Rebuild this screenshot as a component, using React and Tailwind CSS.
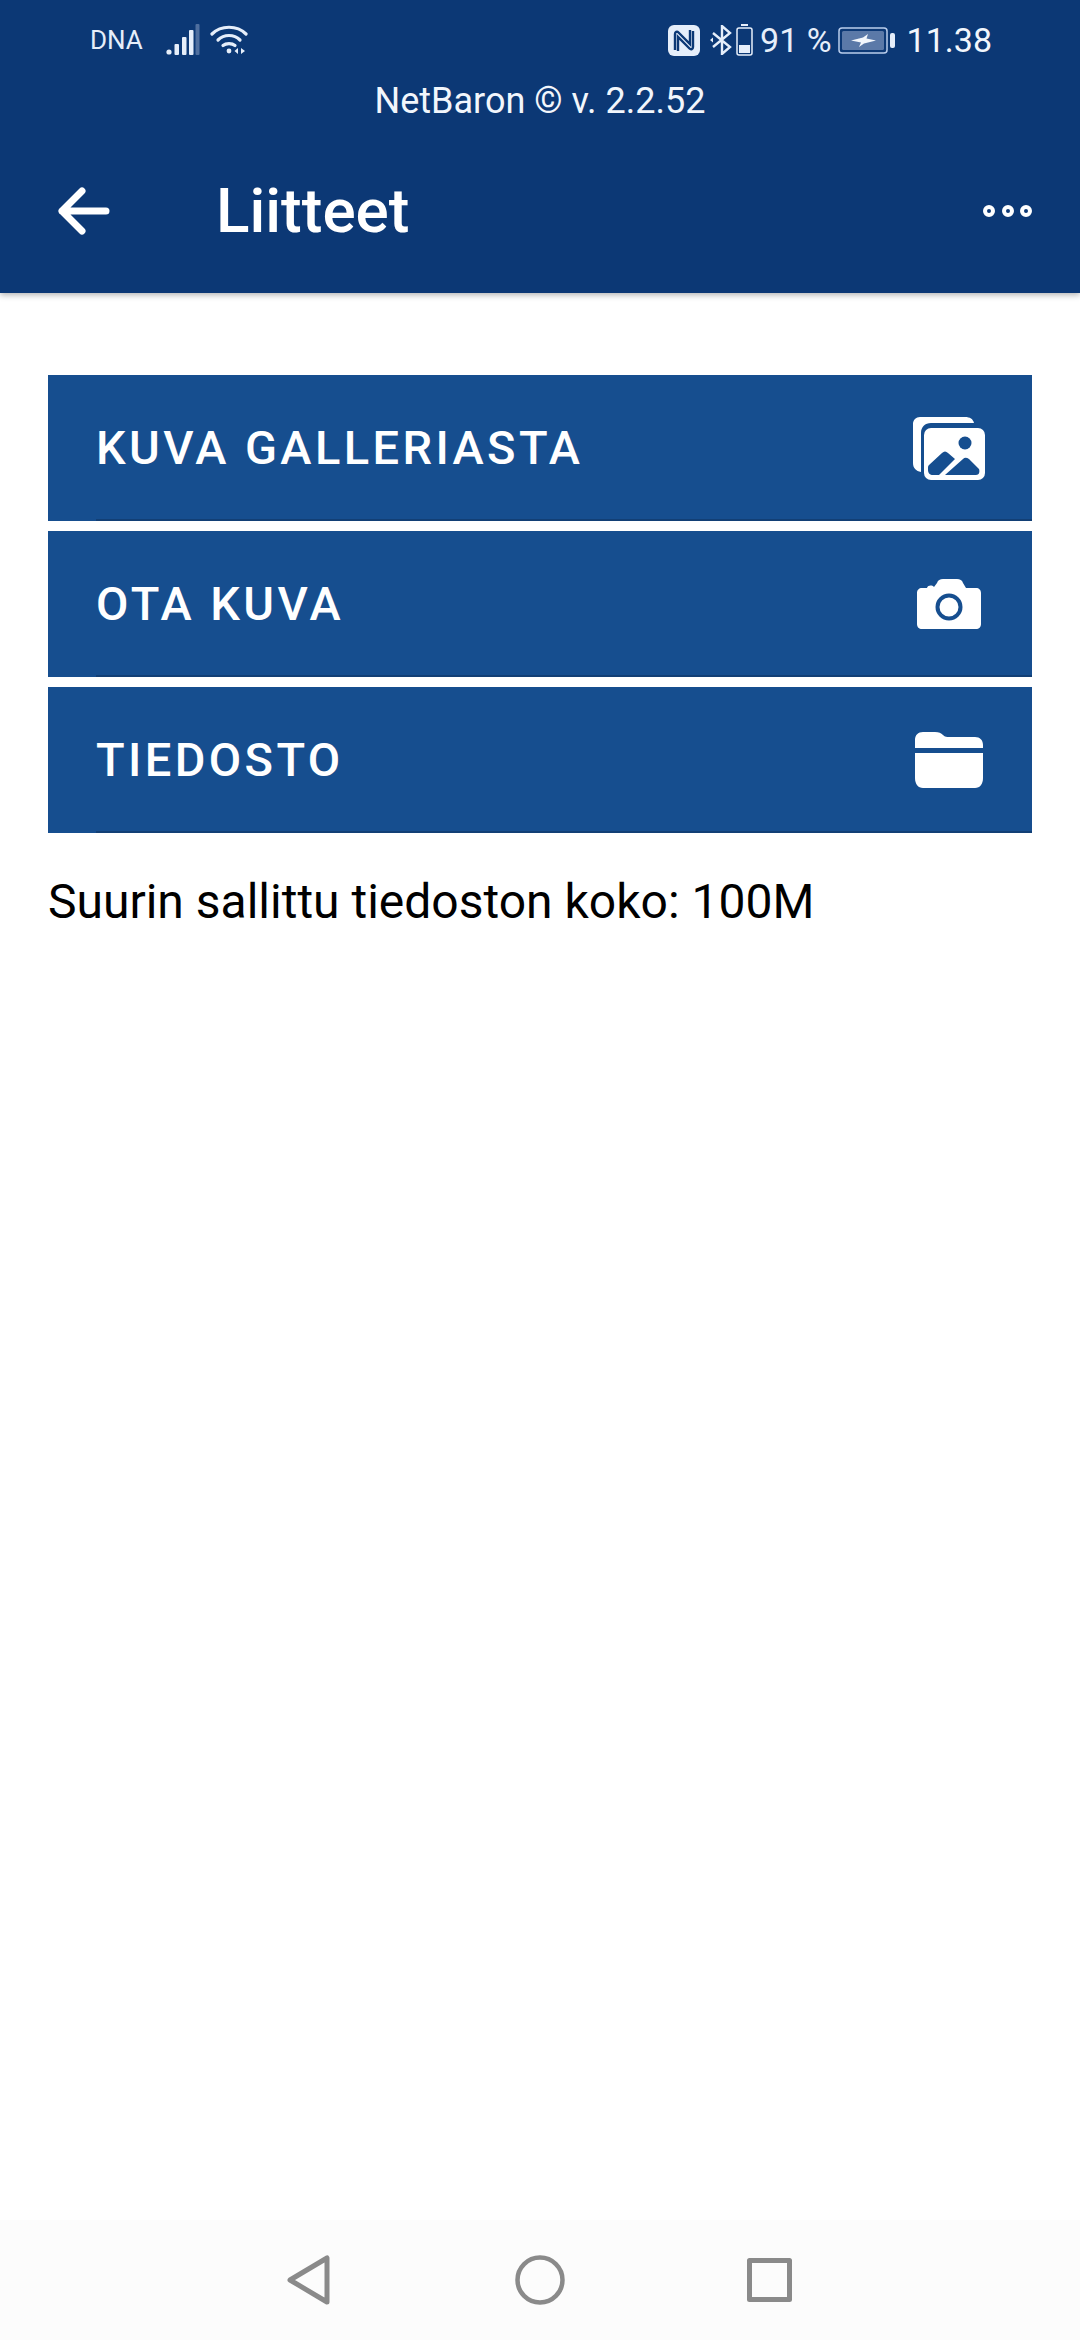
import React from 'react';

const SignalIcon = () => (
  <svg width="34" height="32" viewBox="0 0 34 32" fill="#e6eefa">
    <circle cx="3" cy="28" r="2.6" />
    <rect x="8.5" y="20" width="4.5" height="11" rx="1" />
    <rect x="16" y="13" width="4.5" height="18" rx="1" />
    <rect x="23" y="6" width="4.5" height="25" rx="1" />
    <rect x="29.5" y="0" width="4" height="31" rx="1" fill="#4f6f9f" />
  </svg>
);

const WifiIcon = () => (
  <svg width="38" height="30" viewBox="0 0 38 30" fill="none" stroke="#e6eefa" strokeWidth="3.2" strokeLinecap="round">
    <path d="M2 9C11 0 27 0 36 9" />
    <path d="M8 15C14 9 24 9 30 15" />
    <path d="M13 20.5C16 18 22 18 25 20.5" />
    <circle cx="19" cy="26" r="2.4" fill="#e6eefa" stroke="none" />
    <path d="M28 23L24.5 26L28 29ZM31 23L35 26L31 29Z" fill="#e6eefa" stroke="none" />
  </svg>
);

const NfcIcon = () => (
  <svg width="32" height="31" viewBox="0 0 32 31">
    <rect width="32" height="31" rx="6" fill="#e6eefa" />
    <path d="M7 25V9c0-2 2-3 3.500-1.500L22 19V5" fill="none" stroke="#0c3875" strokeWidth="2.4" />
    <path d="M25 6v16c0 2-2 3-3.500 1.500L10 12v14" fill="none" stroke="#0c3875" strokeWidth="2.4" />
  </svg>
);

const BluetoothIcon = () => (
  <svg width="23" height="30" viewBox="0 0 23 30" fill="none" stroke="#e6eefa" strokeWidth="2.4">
    <path d="M3 8L20 22L12 29V1L20 8L3 22" />
    <path d="M0 15L3 12.5V17.5Z" fill="#e6eefa" stroke="none" />
  </svg>
);

const SmallBattery = () => (
  <svg width="17" height="32" viewBox="0 0 17 32">
    <rect x="5" y="0" width="7" height="2" fill="#e6eefa" />
    <rect x="1" y="4" width="15" height="27" rx="2" fill="none" stroke="#e6eefa" strokeWidth="1.5" />
    <rect x="3" y="21" width="11" height="8" fill="#e6eefa" />
  </svg>
);

const ChargingBattery = () => (
  <svg width="58" height="27" viewBox="0 0 58 27">
    <rect x="1" y="1" width="48" height="25" rx="3" fill="none" stroke="#b9cdec" strokeWidth="1.5" />
    <rect x="4" y="4" width="42" height="19" rx="1.500" fill="#5b79a8" />
    <path d="M13 13.500L25 10.500L30 7L28.500 11.500L38 13.500L26 16.500L21 20L23 15.500Z" fill="#f2f6fc" />
    <rect x="52" y="6" width="5" height="15" rx="2" fill="#e6eefa" />
  </svg>
);

const GalleryIcon = () => (
  <svg width="72" height="63" viewBox="0 0 72 63">
    <path d="M7 0H52C57 0 60 2 61 6H18C12 6 8 10 8 16V55C3 54 0 51 0 46V7C0 3 3 0 7 0Z" fill="#fff" />
    <rect x="11" y="11" width="61" height="52" rx="7" fill="#fff" />
    <circle cx="52" cy="26" r="6.5" fill="#164e8f" />
    <path d="M16 48L29 36C31 34 33 34 35 36L42 42L26 58H20C17 58 15 56 15 53V51C15 50 15 49 16 48Z" fill="#164e8f" />
    <path d="M32 58L50 42C52 40 54 41 56 42L66 52C67 55 66 58 63 58Z" fill="#164e8f" />
  </svg>
);

const CameraIcon = () => (
  <svg width="64" height="50" viewBox="0 0 64 50">
    <path d="M5 9H10C11 6 15 6 17 8L20 4C21 1 23 0 26 0H40C43 0 45 1 46 4L49 9H59C62 9 64 11 64 14V45C64 48 62 50 59 50H5C2 50 0 48 0 45V14C0 11 2 9 5 9Z" fill="#fff" />
    <circle cx="32" cy="28" r="11.5" fill="none" stroke="#164e8f" strokeWidth="4" />
  </svg>
);

const FolderIcon = () => (
  <svg width="68" height="56" viewBox="0 0 68 56">
    <path d="M0 18V8C0 3 3 0 8 0H20C24 0 26 1 28 3C30 5 32 5 34 5H60C65 5 68 8 68 13V16H0Z" fill="#fff" />
    <path d="M0 21H68V46C68 52 65 56 60 56H8C3 56 0 52 0 46Z" fill="#fff" />
  </svg>
);

const ActionButton = ({ label, icon }) => (
  <button className="relative flex h-[146px] w-full items-center justify-between bg-[#164e8f] pl-[48px] pr-[47px]">
    <span className="text-[47px] font-medium tracking-[3.4px] text-white">{label}</span>
    <span className="flex w-[72px] justify-center">{icon}</span>
    <span className="absolute bottom-0 left-[48px] right-0 h-[2px] bg-[#123f75]" />
  </button>
);

const App = () => {
  return (
    <div className="flex h-[2340px] w-[1080px] flex-col bg-white font-['Roboto',sans-serif]">
      <header className="h-[293px] bg-[#0c3875] shadow-[0_2px_6px_rgba(0,0,0,0.3)]">
        <div className="flex h-[80px] items-center justify-between pl-[90px] pr-[88px] text-[#e6eefa]">
          <div className="flex items-center">
            <span className="text-[26px]">DNA</span>
            <span className="ml-[23px]"><SignalIcon /></span>
            <span className="ml-[10px]"><WifiIcon /></span>
          </div>
          <div className="flex items-center">
            <NfcIcon />
            <span className="ml-[10px]"><BluetoothIcon /></span>
            <span className="ml-[3px]"><SmallBattery /></span>
            <span className="ml-[7px] text-[34px]">91 %</span>
            <span className="ml-[6px]"><ChargingBattery /></span>
            <span className="ml-[11px] text-[34px] text-[#f2f6fc]">11.38</span>
          </div>
        </div>
        <div className="text-center text-[36px] leading-[42px] text-[#f2f6fc]">NetBaron © v. 2.2.52</div>
        <div className="relative mt-[54px] flex items-center pl-[57px]">
          <svg width="54" height="50" viewBox="0 0 54 50" fill="none" stroke="#fff" strokeWidth="7" strokeLinecap="round" strokeLinejoin="round">
            <path d="M5 25H49M25 5L5 25L25 45" />
          </svg>
          <h1 className="ml-[105px] text-[62px] font-medium leading-[70px] text-white">Liitteet</h1>
          <div className="absolute right-[48px] top-[29px] flex gap-[6.5px]">
            <span className="h-[12px] w-[12px] rounded-full border-[4px] border-white bg-[#0c3875]" />
            <span className="h-[12px] w-[12px] rounded-full border-[4px] border-white bg-[#0c3875]" />
            <span className="h-[12px] w-[12px] rounded-full border-[4px] border-white bg-[#0c3875]" />
          </div>
        </div>
      </header>

      <main className="flex-1 px-[48px] pt-[82px]">
        <div className="flex flex-col gap-[10px]">
          <ActionButton label="KUVA GALLERIASTA" icon={<GalleryIcon />} />
          <ActionButton label="OTA KUVA" icon={<CameraIcon />} />
          <ActionButton label="TIEDOSTO" icon={<FolderIcon />} />
        </div>
        <p className="mt-[41px] text-[48px] leading-[56px] text-black">Suurin sallittu tiedoston koko: 100M</p>
      </main>

      <nav className="flex h-[120px] items-center bg-[#fcfcfc] pl-[287px]">
        <svg width="44" height="50" viewBox="0 0 44 50" fill="none" stroke="#8a8a8a" strokeWidth="5" strokeLinejoin="round">
          <path d="M3 25L40 3V47Z" />
        </svg>
        <svg className="ml-[184px]" width="50" height="50" viewBox="0 0 50 50" fill="none" stroke="#8a8a8a" strokeWidth="4.5">
          <circle cx="25" cy="25" r="22.500" />
        </svg>
        <svg className="ml-[182px]" width="45" height="44" viewBox="0 0 45 44" fill="none" stroke="#8a8a8a" strokeWidth="5" strokeLinejoin="round">
          <rect x="2.500" y="2.500" width="40" height="39" />
        </svg>
      </nav>
    </div>
  );
};

export default App;
